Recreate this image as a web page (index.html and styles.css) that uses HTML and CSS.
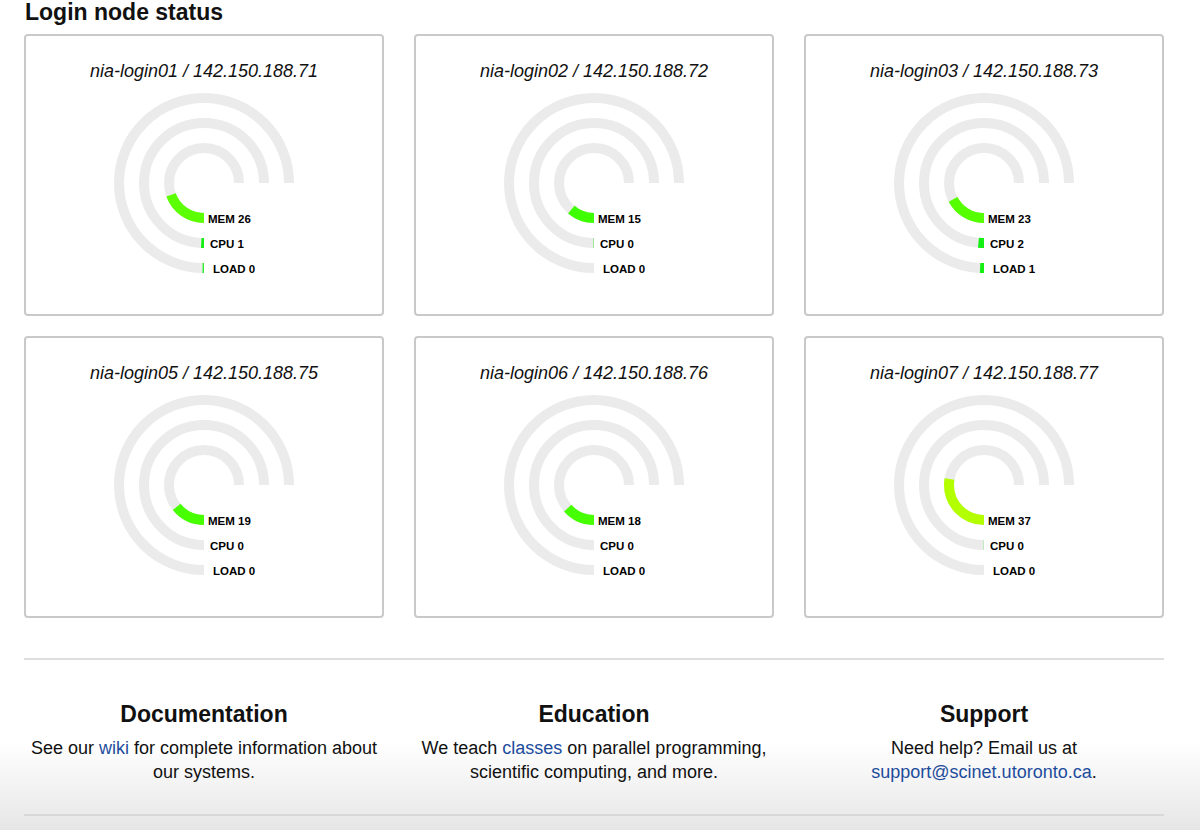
FILE: index.html
```html
<!DOCTYPE html>
<html lang="en">
<head>
<meta charset="utf-8">
<title>Login node status</title>
<link rel="stylesheet" href="styles.css">
</head>
<body>
<div class="page">
  <h3 class="section-title">Login node status</h3>
  <div class="grid">

    <div class="card">
      <div class="card-title">nia-login01 / 142.150.188.71</div>
      <svg class="gauge" width="356" height="232" viewBox="0 0 356 232">
        <g transform="rotate(90 178 101)">
          <circle class="track" cx="178" cy="101" r="35" pathLength="100"/>
          <circle class="track" cx="178" cy="101" r="60" pathLength="100"/>
          <circle class="track" cx="178" cy="101" r="85" pathLength="100"/>
          <circle class="val" cx="178" cy="101" r="35" pathLength="100" stroke="#5cff00" stroke-dasharray="19.5 100"/>
          <circle class="val" cx="178" cy="101" r="60" pathLength="100" stroke="#14f014" stroke-dasharray="0.75 100"/>
          <circle class="val" cx="178" cy="101" r="85" pathLength="100" stroke="#30f030" stroke-dasharray="0.28 100"/>
        </g>
        <text class="gauge-label" x="182" y="141">MEM 26</text>
        <text class="gauge-label" x="184" y="166">CPU 1</text>
        <text class="gauge-label" x="187" y="191">LOAD 0</text>
      </svg>
    </div>

    <div class="card">
      <div class="card-title">nia-login02 / 142.150.188.72</div>
      <svg class="gauge" width="356" height="232" viewBox="0 0 356 232">
        <g transform="rotate(90 178 101)">
          <circle class="track" cx="178" cy="101" r="35" pathLength="100"/>
          <circle class="track" cx="178" cy="101" r="60" pathLength="100"/>
          <circle class="track" cx="178" cy="101" r="85" pathLength="100"/>
          <circle class="val" cx="178" cy="101" r="35" pathLength="100" stroke="#3dff00" stroke-dasharray="11.25 100"/>
          <circle class="val" cx="178" cy="101" r="60" pathLength="100" stroke="#9be89b" stroke-dasharray="0.27 100"/>
        </g>
        <text class="gauge-label" x="182" y="141">MEM 15</text>
        <text class="gauge-label" x="184" y="166">CPU 0</text>
        <text class="gauge-label" x="187" y="191">LOAD 0</text>
      </svg>
    </div>

    <div class="card">
      <div class="card-title">nia-login03 / 142.150.188.73</div>
      <svg class="gauge" width="356" height="232" viewBox="0 0 356 232">
        <g transform="rotate(90 178 101)">
          <circle class="track" cx="178" cy="101" r="35" pathLength="100"/>
          <circle class="track" cx="178" cy="101" r="60" pathLength="100"/>
          <circle class="track" cx="178" cy="101" r="85" pathLength="100"/>
          <circle class="val" cx="178" cy="101" r="35" pathLength="100" stroke="#55ff00" stroke-dasharray="17.25 100"/>
          <circle class="val" cx="178" cy="101" r="60" pathLength="100" stroke="#14f014" stroke-dasharray="1.5 100"/>
          <circle class="val" cx="178" cy="101" r="85" pathLength="100" stroke="#14f014" stroke-dasharray="0.75 100"/>
        </g>
        <text class="gauge-label" x="182" y="141">MEM 23</text>
        <text class="gauge-label" x="184" y="166">CPU 2</text>
        <text class="gauge-label" x="187" y="191">LOAD 1</text>
      </svg>
    </div>

    <div class="card">
      <div class="card-title">nia-login05 / 142.150.188.75</div>
      <svg class="gauge" width="356" height="232" viewBox="0 0 356 232">
        <g transform="rotate(90 178 101)">
          <circle class="track" cx="178" cy="101" r="35" pathLength="100"/>
          <circle class="track" cx="178" cy="101" r="60" pathLength="100"/>
          <circle class="track" cx="178" cy="101" r="85" pathLength="100"/>
          <circle class="val" cx="178" cy="101" r="35" pathLength="100" stroke="#48ff00" stroke-dasharray="14.25 100"/>
        </g>
        <text class="gauge-label" x="182" y="141">MEM 19</text>
        <text class="gauge-label" x="184" y="166">CPU 0</text>
        <text class="gauge-label" x="187" y="191">LOAD 0</text>
      </svg>
    </div>

    <div class="card">
      <div class="card-title">nia-login06 / 142.150.188.76</div>
      <svg class="gauge" width="356" height="232" viewBox="0 0 356 232">
        <g transform="rotate(90 178 101)">
          <circle class="track" cx="178" cy="101" r="35" pathLength="100"/>
          <circle class="track" cx="178" cy="101" r="60" pathLength="100"/>
          <circle class="track" cx="178" cy="101" r="85" pathLength="100"/>
          <circle class="val" cx="178" cy="101" r="35" pathLength="100" stroke="#46ff00" stroke-dasharray="13.5 100"/>
        </g>
        <text class="gauge-label" x="182" y="141">MEM 18</text>
        <text class="gauge-label" x="184" y="166">CPU 0</text>
        <text class="gauge-label" x="187" y="191">LOAD 0</text>
      </svg>
    </div>

    <div class="card">
      <div class="card-title">nia-login07 / 142.150.188.77</div>
      <svg class="gauge" width="356" height="232" viewBox="0 0 356 232">
        <g transform="rotate(90 178 101)">
          <circle class="track" cx="178" cy="101" r="35" pathLength="100"/>
          <circle class="track" cx="178" cy="101" r="60" pathLength="100"/>
          <circle class="track" cx="178" cy="101" r="85" pathLength="100"/>
          <circle class="val" cx="178" cy="101" r="35" pathLength="100" stroke="#b3ff00" stroke-dasharray="27.75 100"/>
          <circle class="val" cx="178" cy="101" r="60" pathLength="100" stroke="#bfe8bf" stroke-dasharray="0.25 100"/>
        </g>
        <text class="gauge-label" x="182" y="141">MEM 37</text>
        <text class="gauge-label" x="184" y="166">CPU 0</text>
        <text class="gauge-label" x="187" y="191">LOAD 0</text>
      </svg>
    </div>

  </div>
</div>

<footer class="footer">
  <div class="footer-inner">
    <div class="footer-col">
      <h3 class="footer-heading">Documentation</h3>
      <p class="footer-text">See our <a href="#">wiki</a> for complete information about our systems.</p>
    </div>
    <div class="footer-col">
      <h3 class="footer-heading">Education</h3>
      <p class="footer-text">We teach <a href="#">classes</a> on parallel programming, scientific computing, and more.</p>
    </div>
    <div class="footer-col">
      <h3 class="footer-heading">Support</h3>
      <p class="footer-text">Need help? Email us at <a href="#">support@scinet.utoronto.ca</a>.</p>
    </div>
  </div>
</footer>
</body>
</html>
```
FILE: styles.css
```css
html, body {
  margin: 0;
  padding: 0;
  background: #fff;
}

body {
  font-family: "Liberation Sans", Arial, Helvetica, sans-serif;
  color: #111;
  overflow: hidden;
}

.page {
  width: 1140px;
  padding-left: 24px;
}

.section-title {
  margin: 0 0 10px;
  font-size: 23px;
  line-height: 24px;
  font-weight: bold;
  padding-left: 1px;
}

.grid {
  display: grid;
  grid-template-columns: repeat(3, 360px);
  column-gap: 30px;
  row-gap: 20px;
}

.card {
  border: 2px solid #c9c9c9;
  border-radius: 4px;
  padding-top: 24px;
  text-align: center;
  background: #fff;
}

.card-title {
  font-size: 18px;
  line-height: 22px;
  font-style: italic;
  color: #111;
}

.gauge {
  display: block;
}

.track {
  fill: none;
  stroke: #ebebeb;
  stroke-width: 10;
  stroke-dasharray: 75 100;
}

.val {
  fill: none;
  stroke-width: 10;
}

.gauge-label {
  font-family: "Liberation Sans", Arial, Helvetica, sans-serif;
  font-size: 11.5px;
  font-weight: bold;
  fill: #000;
}

.footer {
  margin-top: 40px;
  height: 172px;
  background: linear-gradient(to bottom, #fff 0, #fff 85px, #e6e6e6 172px);
}

.footer-inner {
  margin-left: 24px;
  width: 1140px;
  box-sizing: border-box;
  border-top: 2px solid #dedede;
  border-bottom: 2px solid #d8d8d8;
  padding: 41px 0 30px;
  display: grid;
  grid-template-columns: repeat(3, 360px);
  column-gap: 30px;
  text-align: center;
}

.footer-heading {
  margin: 0 0 9px;
  font-size: 23px;
  line-height: 26px;
  font-weight: bold;
}

.footer-text {
  margin: 0;
  font-size: 18px;
  line-height: 24px;
}

.footer-text a {
  color: #1d4c9c;
  text-decoration: none;
}
```
